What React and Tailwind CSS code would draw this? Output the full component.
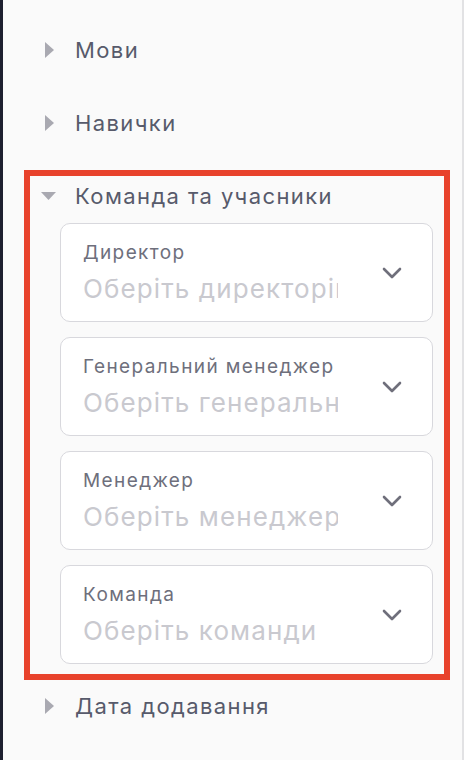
import React from "react";

const font = { fontFamily: "Inter, 'Noto Sans', sans-serif" };

function TriRight() {
  return (
    <svg width="9" height="16" viewBox="0 0 9 16" className="shrink-0">
      <path d="M0 0 L9 8 L0 16 Z" fill="#a9a9b1" />
    </svg>
  );
}
function TriDown() {
  return (
    <svg width="15" height="8" viewBox="0 0 15 8" className="shrink-0">
      <path d="M0 0 L15 0 L7.5 8 Z" fill="#a9a9b1" />
    </svg>
  );
}

function Chevron() {
  return (
    <svg width="20" height="12" viewBox="0 0 20 12" className="shrink-0">
      <path d="M2 2 L10 10 L18 2" fill="none" stroke="#6f6f7b" strokeWidth="2.6" strokeLinecap="round" strokeLinejoin="round" />
    </svg>
  );
}

function Header({ label, open }) {
  return (
    <div className="flex h-[40px] items-center">
      <div className={open ? "flex w-[45px] pl-[11px]" : "flex w-[45px] pl-[15px]"}>
        {open ? <TriDown /> : <TriRight />}
      </div>
      <span className="text-[22px] tracking-[1.4px] text-[#575a6b]">{label}</span>
    </div>
  );
}

function Select({ label, placeholder }) {
  return (
    <div className="flex h-[99px] items-center rounded-[10px] border border-[#d8d8dd] bg-white pl-[22px] pr-[30px]">
      <div className="flex w-[255px] flex-col overflow-hidden">
        <span className="whitespace-nowrap text-[19px] leading-[24px] tracking-[1.4px] text-[#6e6f7c]">{label}</span>
        <span className="mt-[8px] whitespace-nowrap text-[26px] leading-[32px] tracking-[1.1px] text-[#c9c9cf]">{placeholder}</span>
      </div>
      <div className="flex flex-1 justify-end">
        <Chevron />
      </div>
    </div>
  );
}

export default function App() {
  return (
    <div className="flex h-[760px] w-[464px] overflow-hidden bg-[#fafafa]" style={font}>
      <div className="w-[3px] bg-[#1d2030]" />
      <div className="flex flex-1 flex-col pl-[15px] pt-[30px]">
        <div className="pl-[12px]">
          <Header label="Мови" />
        </div>
        <div className="mt-[33px] pl-[12px]">
          <Header label="Навички" />
        </div>
        <div className="mt-[27px] mr-[12px] ml-[6px] flex flex-col border-[6px] border-[#e8422c] pb-[10px] pl-[30px] pr-[11px]">
          <div className="-ml-[30px]">
            <Header label="Команда та учасники" open />
          </div>
          <div className="mt-[7px] flex flex-col gap-[15px]">
            <Select label="Директор" placeholder="Оберіть директорів" />
            <Select label="Генеральний менеджер" placeholder="Оберіть генеральних менеджерів" />
            <Select label="Менеджер" placeholder="Оберіть менеджерів" />
            <Select label="Команда" placeholder="Оберіть команди" />
          </div>
        </div>
        <div className="mt-[6px] pl-[12px]">
          <Header label="Дата додавання" />
        </div>
      </div>
      <div className="w-[2px] bg-[#e2e2e4]" />
    </div>
  );
}
